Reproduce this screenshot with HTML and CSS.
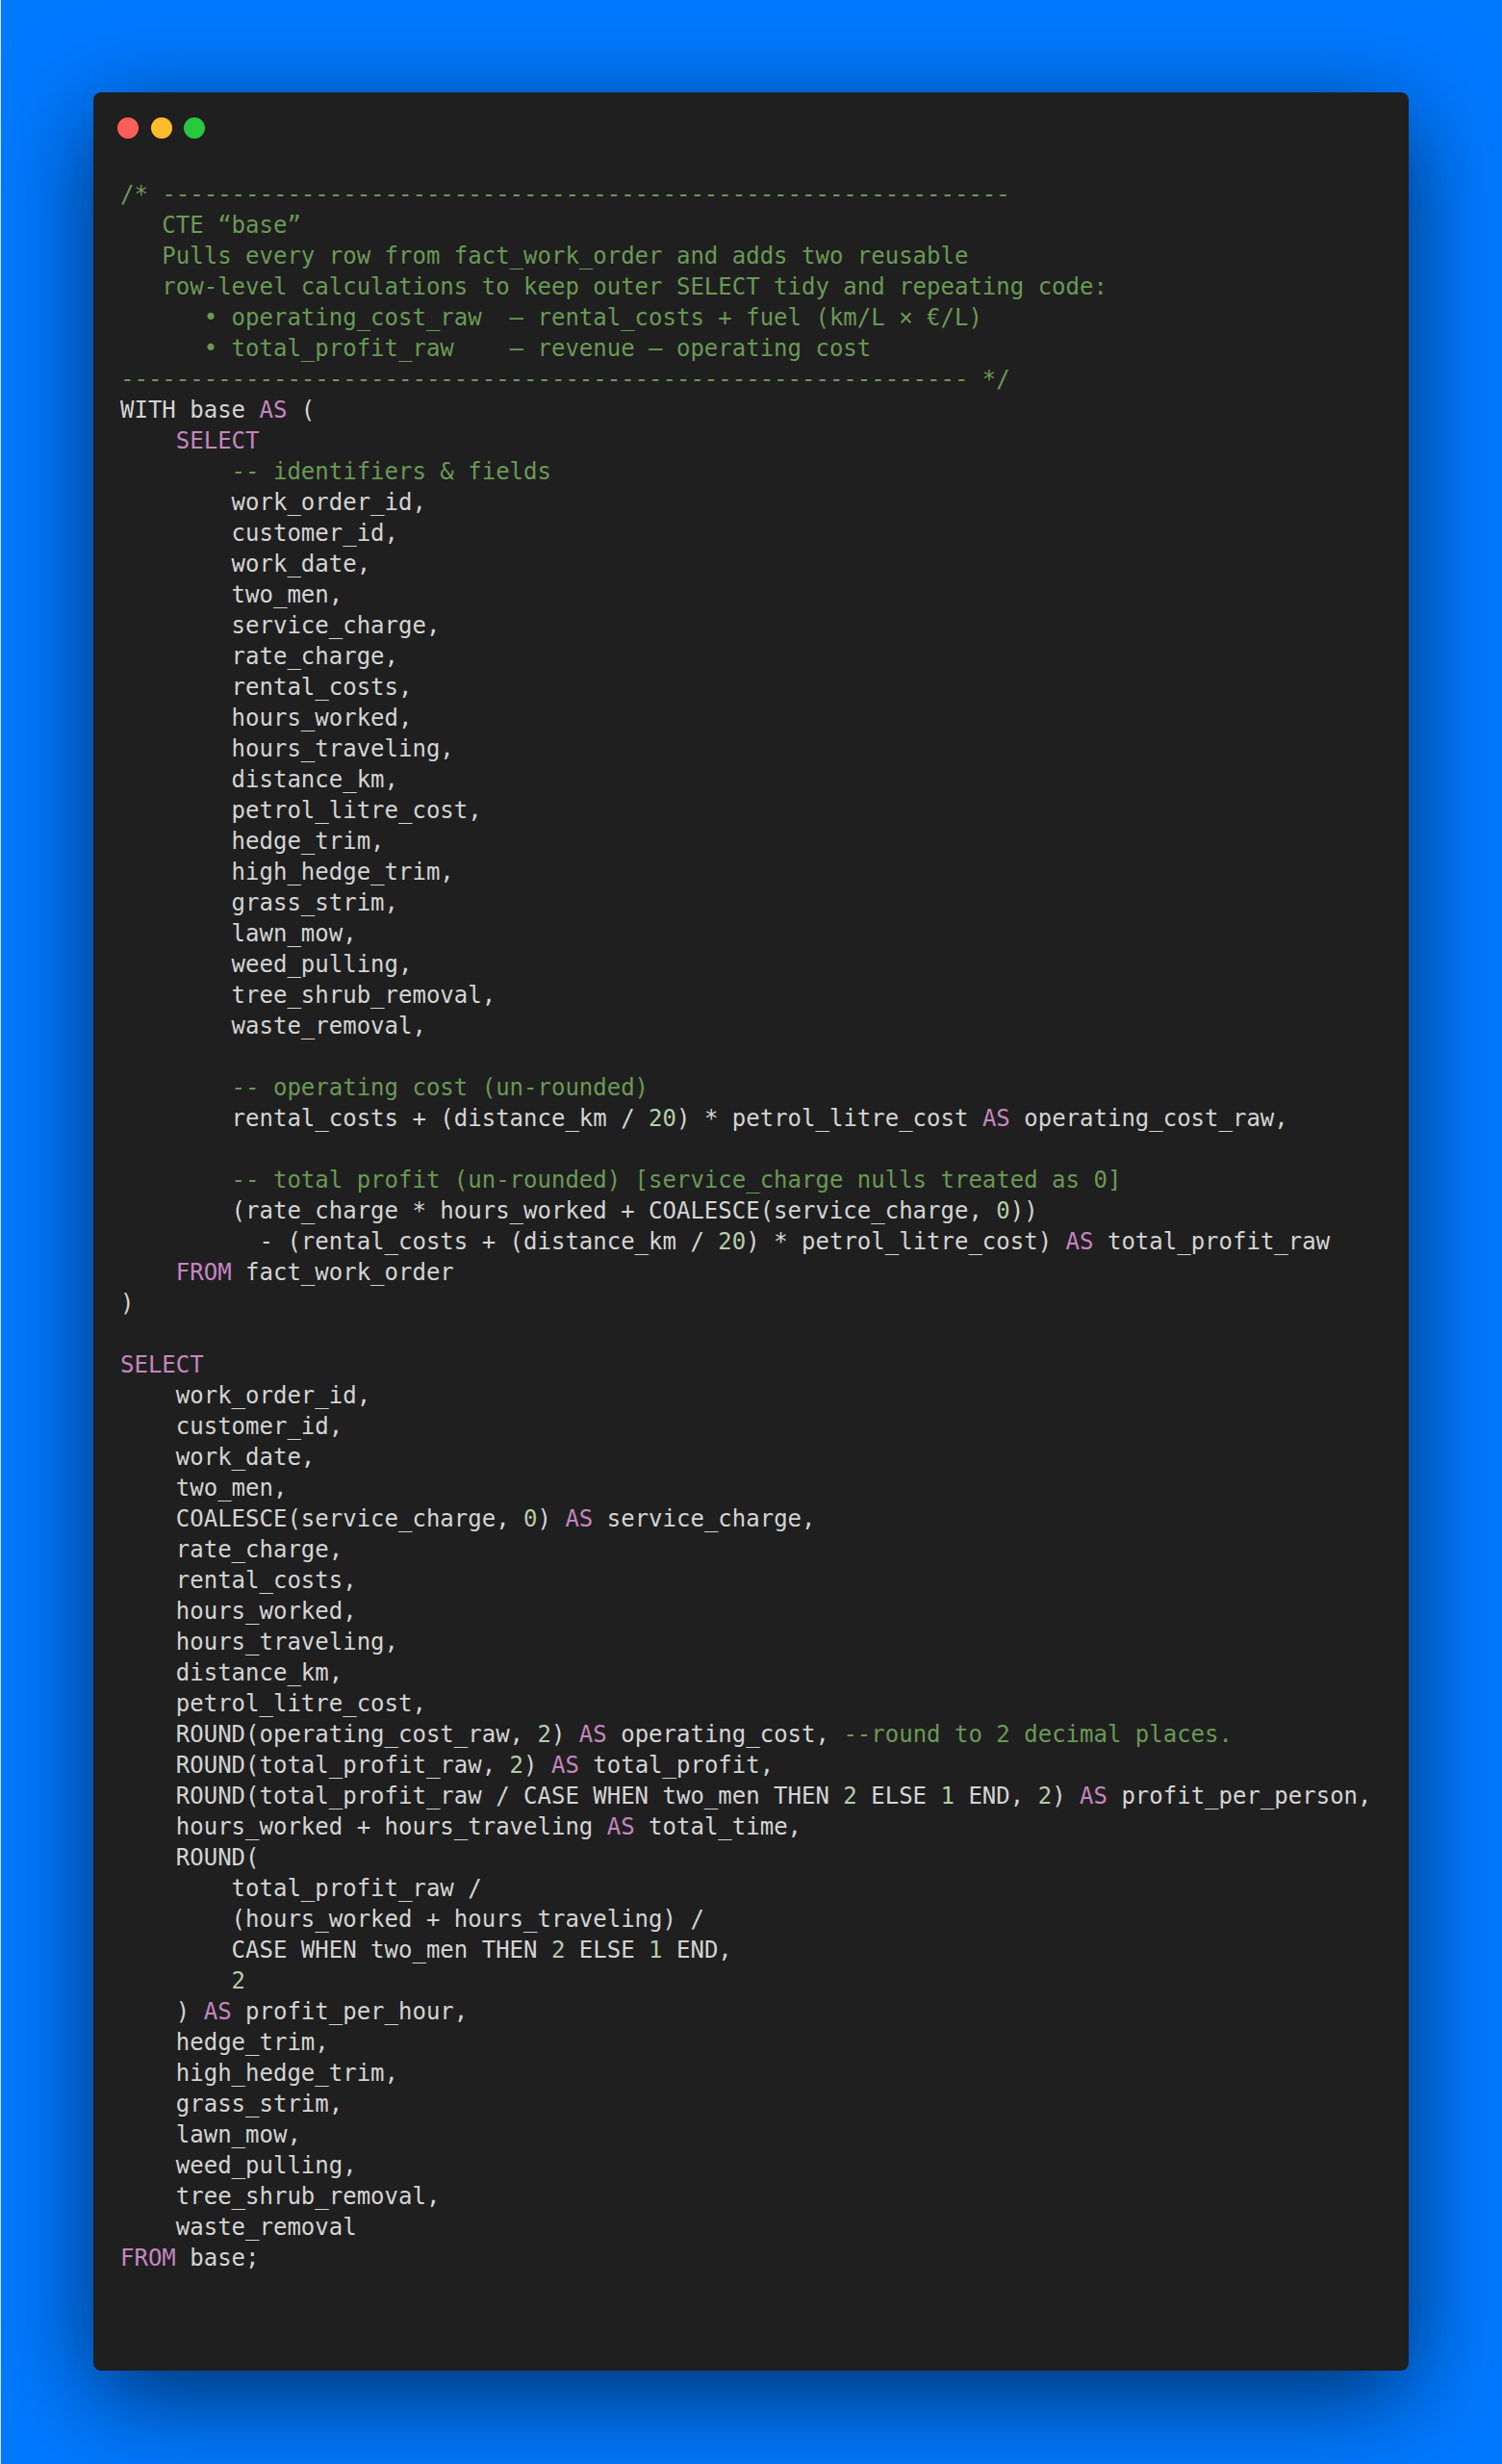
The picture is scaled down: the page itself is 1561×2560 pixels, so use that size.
FILE: index.html
```html
<!DOCTYPE html>
<html lang="en">
<head>
<meta charset="utf-8">
<title>SQL snippet</title>
<link rel="stylesheet" href="styles.css">
</head>
<body>
<div class="page">
  <div class="window">
    <div class="titlebar">
      <span class="dot dot-red"></span>
      <span class="dot dot-yellow"></span>
      <span class="dot dot-green"></span>
    </div>
<pre class="code"><span class="c">/* -------------------------------------------------------------</span>
<span class="c">   CTE “base”</span>
<span class="c">   Pulls every row from fact_work_order and adds two reusable</span>
<span class="c">   row-level calculations to keep outer SELECT tidy and repeating code:</span>
<span class="c">      • operating_cost_raw  – rental_costs + fuel (km/L × €/L)</span>
<span class="c">      • total_profit_raw    – revenue – operating cost</span>
<span class="c">------------------------------------------------------------- */</span>
WITH base <span class="k">AS</span> (
    <span class="k">SELECT</span>
        <span class="c">-- identifiers &amp; fields</span>
        work_order_id,
        customer_id,
        work_date,
        two_men,
        service_charge,
        rate_charge,
        rental_costs,
        hours_worked,
        hours_traveling,
        distance_km,
        petrol_litre_cost,
        hedge_trim,
        high_hedge_trim,
        grass_strim,
        lawn_mow,
        weed_pulling,
        tree_shrub_removal,
        waste_removal,

        <span class="c">-- operating cost (un-rounded)</span>
        rental_costs + (distance_km / <span class="n">20</span>) * petrol_litre_cost <span class="k">AS</span> operating_cost_raw,

        <span class="c">-- total profit (un-rounded) [service_charge nulls treated as 0]</span>
        (rate_charge * hours_worked + COALESCE(service_charge, <span class="n">0</span>))
          - (rental_costs + (distance_km / <span class="n">20</span>) * petrol_litre_cost) <span class="k">AS</span> total_profit_raw
    <span class="k">FROM</span> fact_work_order
)

<span class="k">SELECT</span>
    work_order_id,
    customer_id,
    work_date,
    two_men,
    COALESCE(service_charge, <span class="n">0</span>) <span class="k">AS</span> service_charge,
    rate_charge,
    rental_costs,
    hours_worked,
    hours_traveling,
    distance_km,
    petrol_litre_cost,
    ROUND(operating_cost_raw, <span class="n">2</span>) <span class="k">AS</span> operating_cost, <span class="c">--round to 2 decimal places.</span>
    ROUND(total_profit_raw, <span class="n">2</span>) <span class="k">AS</span> total_profit,
    ROUND(total_profit_raw / CASE WHEN two_men THEN <span class="n">2</span> ELSE <span class="n">1</span> END, <span class="n">2</span>) <span class="k">AS</span> profit_per_person,
    hours_worked + hours_traveling <span class="k">AS</span> total_time,
    ROUND(
        total_profit_raw /
        (hours_worked + hours_traveling) /
        CASE WHEN two_men THEN <span class="n">2</span> ELSE <span class="n">1</span> END,
        <span class="n">2</span>
    ) <span class="k">AS</span> profit_per_hour,
    hedge_trim,
    high_hedge_trim,
    grass_strim,
    lawn_mow,
    weed_pulling,
    tree_shrub_removal,
    waste_removal
<span class="k">FROM</span> base;</pre>
  </div>
</div>
</body>
</html>
```

FILE: styles.css
```css
html, body {
  margin: 0;
  padding: 0;
}

body {
  background: #0079ff;
  font-family: "DejaVu Sans Mono", "Liberation Mono", monospace;
}

.page {
  width: 1561px;
  height: 2560px;
  box-sizing: border-box;
  padding: 96px 97px 97px 97px;
  background: #0079ff;
  box-shadow: inset 1px 0 0 #cfe2f8;
}

.window {
  background: #1f1f1f;
  border-radius: 8px;
  box-shadow: 0 26px 100px rgba(0, 0, 0, 0.6);
}

.titlebar {
  display: flex;
  gap: 12.5px;
  padding: 26px 0 0 25px;
  height: 22px;
}

.dot {
  width: 22px;
  height: 22px;
  border-radius: 50%;
  display: block;
}

.dot-red { background: #ff5f56; }
.dot-yellow { background: #ffbd2e; }
.dot-green { background: #27c93f; }

.code {
  margin: 42px 0 0 0;
  padding: 0 28px 101px 28px;
  font-family: "DejaVu Sans Mono", "Liberation Mono", monospace;
  font-size: 24px;
  line-height: 32px;
  color: #d4d4d4;
  white-space: pre;
}

.k { color: #c586c0; }
.c { color: #6a9955; }
.n { color: #b5cea8; }
```
